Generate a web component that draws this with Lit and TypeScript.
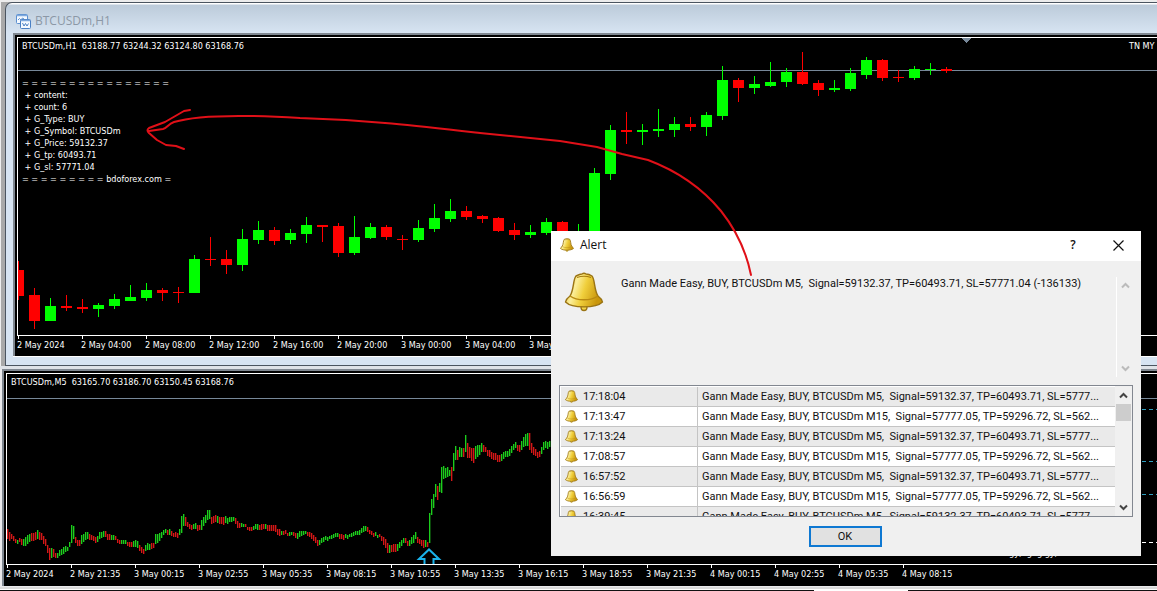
import { LitElement, html, svg, css } from "lit";
import { customElement, property } from "lit/decorators.js";

type Candle = [high: number, low: number, top: number, bottom: number, up: 0 | 1];

// Hourly candles, 16px apart; values are in the vertical units of the workspace.
const H1: Candle[] = [
  [261, 300, 270, 296, 0], [288, 329, 295, 321, 0], [298, 321, 306, 321, 1], [295, 311, 306, 308, 0],
  [299, 313, 307, 309, 0], [303, 317, 305, 309, 1], [294, 309, 299, 306, 1], [285, 301, 297, 301, 1],
  [283, 301, 290, 298, 1], [288, 301, 290, 293, 0], [287, 303, 292, 293, 0], [255, 293, 259, 293, 1],
  [237, 266, 259, 260, 0], [250, 274, 259, 265, 0], [229, 271, 239, 265, 1], [221, 244, 230, 240, 1],
  [227, 245, 230, 241, 0], [229, 244, 233, 240, 1], [217, 243, 225, 234, 1], [225, 242, 225, 227, 0],
  [223, 257, 226, 253, 0], [216, 255, 237, 253, 1], [223, 239, 227, 238, 1], [225, 240, 227, 237, 0],
  [235, 250, 239, 240, 0], [220, 242, 228, 240, 1], [204, 232, 218, 229, 1], [199, 222, 211, 219, 1],
  [206, 220, 211, 217, 0], [215, 223, 216, 219, 0], [217, 232, 218, 231, 0], [223, 240, 230, 235, 0],
  [225, 238, 232, 235, 1], [218, 235, 222, 233, 1], [221, 235, 222, 235, 0], [224, 236, 231, 235, 1],
  [168, 240, 173, 240, 1], [125, 180, 130, 174, 1], [112, 144, 130, 132, 0], [124, 145, 130, 132, 1],
  [109, 137, 129, 131, 1], [117, 137, 124, 130, 1], [117, 131, 124, 127, 0], [112, 136, 115, 127, 1],
  [66, 120, 80, 116, 1], [78, 102, 80, 88, 0], [76, 94, 84, 88, 1], [62, 87, 82, 86, 1],
  [68, 87, 72, 82, 1], [52, 85, 72, 84, 0], [80, 96, 83, 90, 0], [80, 92, 88, 90, 1],
  [68, 91, 73, 89, 1], [57, 79, 60, 75, 1], [59, 81, 60, 78, 0], [70, 82, 77, 78, 0],
  [66, 80, 69, 78, 1], [63, 75, 69, 70, 1], [67, 73, 69, 71, 0],
];

// Five-minute range envelope: x, high, low. Bars between the points are interpolated.
const M5: [number, number, number][] = [
  [7, 529, 539], [9, 532, 541], [11, 534, 539], [15, 539, 543], [19, 538, 542], [22, 540, 547], [25, 537, 546],
  [28, 533, 541], [36, 533, 541], [37, 530, 539], [41, 533, 540], [43, 536, 544], [46, 542, 548], [49, 548, 560],
  [52, 548, 557], [55, 553, 558], [59, 550, 556], [63, 547, 554], [67, 547, 551], [69, 542, 547], [71, 525, 543],
  [73, 526, 539], [75, 537, 543], [79, 540, 546], [81, 535, 544], [87, 532, 539], [91, 535, 540], [95, 537, 543],
  [99, 532, 539], [103, 531, 537], [109, 534, 540], [115, 536, 540], [119, 540, 544], [125, 540, 544],
  [131, 542, 547], [137, 541, 548], [141, 547, 553], [143, 549, 554], [147, 543, 550], [153, 543, 548],
  [155, 534, 544], [161, 532, 538], [165, 529, 533], [169, 529, 535], [173, 533, 537], [177, 533, 538],
  [179, 529, 535], [181, 516, 533], [183, 514, 526], [187, 522, 527], [191, 525, 530], [195, 523, 529],
  [199, 525, 530], [201, 520, 530], [205, 515, 523], [207, 510, 520], [209, 510, 519], [211, 517, 524],
  [217, 516, 523], [223, 517, 525], [229, 517, 522], [233, 517, 521], [237, 521, 528], [243, 524, 527],
  [251, 527, 531], [257, 524, 530], [265, 524, 529], [273, 525, 531], [279, 529, 536], [281, 531, 535],
  [291, 532, 535], [295, 533, 538], [299, 531, 537], [305, 531, 534], [310, 532, 537], [314, 537, 543],
  [317, 540, 546], [323, 537, 542], [329, 536, 539], [337, 533, 537], [343, 535, 540], [349, 534, 537],
  [357, 531, 535], [363, 526, 532], [367, 527, 532], [373, 533, 537], [379, 534, 537], [384, 538, 547],
  [387, 543, 553], [391, 545, 552], [395, 544, 552], [399, 542, 548], [403, 538, 543], [408, 541, 546],
  [413, 535, 543], [415, 532, 539], [419, 539, 544], [423, 540, 548], [427, 542, 547], [429, 513, 543],
  [431, 499, 515], [433, 494, 508], [435, 484, 497], [437, 486, 500], [439, 483, 492], [441, 467, 493],
  [443, 466, 479], [445, 468, 478], [447, 467, 477], [449, 470, 476], [451, 467, 481], [453, 453, 471],
  [455, 446, 460], [457, 450, 460], [459, 447, 457], [463, 448, 457], [465, 435, 452], [467, 443, 458],
  [469, 447, 458], [473, 448, 463], [477, 445, 457], [481, 443, 452], [485, 447, 452], [489, 450, 457],
  [493, 453, 460], [499, 455, 462], [503, 452, 459], [507, 451, 457], [511, 446, 453], [515, 442, 448],
  [519, 445, 452], [523, 437, 447], [527, 433, 446], [529, 433, 450], [531, 443, 453], [534, 450, 457],
  [539, 451, 457], [543, 442, 450], [549, 441, 447], [555, 440, 448],
];

function rangeBars() {
  const bars: { x: number; hi: number; lo: number; up: boolean }[] = [];
  let k = 0;
  for (let x = 7; x <= 553; x += 2) {
    while (M5[k + 1][0] < x) k++;
    const [x0, h0, l0] = M5[k];
    const [x1, h1, l1] = M5[k + 1];
    const t = (x - x0) / (x1 - x0);
    const wobble = x === x0 || x === x1 ? 0 : ((x * 7) % 5) - 2;
    const slope = h1 + l1 - h0 - l0;
    const up = Math.abs(slope) < 3 ? Math.floor(x / 6) % 2 === 0 : slope < 0;
    bars.push({ x, hi: Math.round(h0 + (h1 - h0) * t + wobble / 2), lo: Math.round(l0 + (l1 - l0) * t + wobble / 2), up });
  }
  return bars;
}

const bell = (size: number) => html`
  <svg class="bell" width=${size} height=${size} viewBox="0 0 40 40" aria-hidden="true">
    <defs>
      <linearGradient id="g" x1="0" x2="1" y1="0" y2="0.3">
        <stop offset="0" stop-color="#e9bd1c" /><stop offset="0.35" stop-color="#fbee9a" />
        <stop offset="0.6" stop-color="#f0cf3c" /><stop offset="1" stop-color="#c9960c" />
      </linearGradient>
    </defs>
    <circle cx="20" cy="35.500" r="3" fill="#f3d64a" stroke="#9a7414" stroke-width="1.300" />
    <path d="M12 4 Q16 2 18 2 Q20 0.500 22 2 Q25 2 28 4 C31 7 30 18 34 24 Q38 27 38.500 30 C32 36.500 8 36.500 1.500 30 Q2 27 6 24 C10 18 9 7 12 4Z"
      fill="url(#g)" stroke="#9a7414" stroke-width=${size < 20 ? 2.4 : 1.4} stroke-linejoin="round" />
    <path d="M6 24 C13 29 27 29 34 24" fill="none" stroke="#b98a12" stroke-width="1.300" />
    <path d="M13 5.500 Q20 3 27 5.500" fill="none" stroke="#a67c10" stroke-width="1.200" />
  </svg>`;

const chevron = (up: boolean) => html`
  <svg width="9" height="7" viewBox="0 0 9 7" aria-hidden="true">
    <path d=${up ? "M1 5.500 L4.500 2 L8 5.500" : "M1 1.500 L4.500 5 L8 1.500"} fill="none" stroke="currentColor" stroke-width="2" />
  </svg>`;

@customElement("time-axis")
class TimeAxis extends LitElement {
  @property({ attribute: false }) labels: string[] = [];
  static styles = css`
    :host { display: flex; height: 17px; overflow: hidden; }
    .label { flex: 0 0 64px; white-space: nowrap; line-height: 12px; }
  `;
  render() {
    return this.labels.map((l) => html`<span class="label">${l}</span>`);
  }
}

@customElement("h1-chart")
class H1Chart extends LitElement {
  static styles = css`
    :host { display: grid; background: #000; }
    svg { grid-area: 1 / 1; width: 100%; height: 299px; display: block; shape-rendering: crispEdges; }
    .notes { grid-area: 1 / 1; padding: 3px 0 0 5px; line-height: 12px; min-width: 0; overflow: hidden; }
    .head { display: flex; justify-content: space-between; }
    .expert { flex: 0 0 28px; white-space: nowrap; }
    .comment { margin: 25px 0 0; font: inherit; line-height: 12px; white-space: pre; }
    .quote { white-space: pre; }
  `;
  render() {
    return html`
      <svg aria-label="BTCUSDm hourly candles">
        <g transform="translate(-17 -37)">
          <path d="M18 70.500H3000" stroke="#778899" />
          ${H1.map(([hi, lo, top, bottom, up], i) => {
            const x = 18 + i * 16;
            const fill = up ? "#00ff00" : "#ff0000";
            return svg`<rect x=${x} y=${hi} width="1" height=${lo - hi} fill=${fill} />
              <rect x=${x - 5} y=${top} width="11" height=${bottom - top} fill=${fill} />`;
          })}
          <path d="M961 38H972L966.500 43Z" fill="#778899" />
          <path d="M16 37H17V336H16Z" fill="#000" />
          <path d="M17.500 336V37.500H3000M17 335.500H3000" fill="none" stroke="#fff" />
        </g>
      </svg>
      <div class="notes">
        <div class="head">
          <span class="quote">BTCUSDm,H1  63188.77 63244.32 63124.80 63168.76</span>
          <span class="expert">TN MY</span>
        </div>
        <pre class="comment">${[
          "= = = = = = = = = = = = = = = =",
          " + content:",
          " + count: 6",
          " + G_Type: BUY",
          " + G_Symbol: BTCUSDm",
          " + G_Price: 59132.37",
          " + G_tp: 60493.71",
          " + G_sl: 57771.04",
          "= = = = = = = = = bdoforex.com =",
        ].join("\n")}</pre>
      </div>`;
  }
}

@customElement("m5-chart")
class M5Chart extends LitElement {
  static styles = css`
    :host { display: grid; background: #000; }
    svg { grid-area: 1 / 1; width: 100%; height: 192px; display: block; shape-rendering: crispEdges; }
    .arrow { shape-rendering: auto; }
    .quote { grid-area: 1 / 1; padding: 3px 0 0 5px; line-height: 12px; white-space: pre; }
  `;
  render() {
    return html`
      <svg aria-label="BTCUSDm five minute bars">
        <g transform="translate(-6 -373)">
          <path d="M7 398.500H3000" stroke="#778899" />
          ${rangeBars().map((b) => {
            const fill = b.up ? "#20f020" : "#f81c1c";
            return svg`<rect x=${b.x} y=${b.hi} width="2" height=${b.lo - b.hi} fill=${fill} fill-opacity="0.3" />
              <rect x=${b.x} y=${b.hi} width="1" height=${b.lo - b.hi} fill=${fill} fill-opacity="0.8" />`;
          })}
          <path d="M1142 409.500H3000M1142 461.500H3000M1142 494.500H3000" stroke="#2f9fc0" stroke-dasharray="4 3" />
          <path d="M1142 542.500H3000" stroke="#fff" stroke-dasharray="4 3" />
          <path class="arrow" d="M424.500 564V559H419L429 549.500L439 559H433.500V564" fill="none" stroke="#1ab2ea" stroke-width="2" />
          <path d="M6.500 565V373.500H3000M6 564.500H3000" fill="none" stroke="#fff" />
        </g>
      </svg>
      <span class="quote">BTCUSDm,M5  63165.70 63186.70 63150.45 63168.76</span>`;
  }
}

@customElement("axis-ticks")
class AxisTicks extends LitElement {
  static styles = css`
    :host { display: block; height: 3px; overflow: hidden; }
    svg { display: block; width: 100%; height: 3px; }
  `;
  @property({ type: Number }) count = 15;
  render() {
    return html`<svg aria-hidden="true">${Array.from({ length: this.count }, (_, i) =>
      svg`<rect x=${1 + i * 64} y="0" width="1" height="3" fill="#fff" />`)}</svg>`;
  }
}

const SHORT = "Gann Made Easy, BUY, BTCUSDm M5,  Signal=59132.37, TP=60493.71, SL=5777...";
const LONG = "Gann Made Easy, BUY, BTCUSDm M15,  Signal=57777.05, TP=59296.72, SL=562...";
const ALERTS: [string, string][] = [
  ["17:18:04", SHORT], ["17:13:47", LONG], ["17:13:24", SHORT], ["17:08:57", LONG],
  ["16:57:52", SHORT], ["16:56:59", LONG], ["16:39:45", SHORT],
];

@customElement("alert-dialog")
class AlertDialog extends LitElement {
  static styles = css`
    :host { display: block; background: #f0f0f0; color: #111; font: 11px/14px Roboto, "Noto Sans", sans-serif; }
    button { font: inherit; color: inherit; cursor: default; }
    .title { display: flex; align-items: center; height: 30px; box-sizing: border-box; background: #fff; padding: 0 11px 2px 9px; font: 12px/16px "Open Sans", sans-serif; }
    .title .name { margin: 0 auto 0 6px; font: inherit; }
    .title button { border: 0; background: none; padding: 0; width: 24px; height: 24px; display: grid; place-items: center; }
    .title button.help { margin-right: 21px; font-weight: 600; }
    .message { display: flex; height: 105px; padding: 11px 8px 8px 13px; }
    .message .text { flex: 1; margin: 5px 0 0 17px; white-space: pre; }
    .scroll { display: flex; flex-direction: column; justify-content: space-between; }
    .scroll button { border: 0; padding: 0; height: 17px; background: #f0f0f0; display: grid; place-items: center; }
    .side { width: 16px; margin-top: 5px; border-left: 1px solid #fff; color: #bbb; }
    .list { display: flex; height: 130px; margin: 0 8px; border: 1px solid #828790; background: #fff; overflow: hidden; }
    .rows { flex: 1; min-width: 0; overflow: hidden; padding: 1px 0 0 1px; }
    table { width: 100%; border-collapse: collapse; table-layout: fixed; }
    td { height: 19px; padding: 0; border-bottom: 1px solid #c4c4c4; white-space: pre; overflow: hidden; }
    tr:nth-child(odd) td { background: #eaeaea; }
    td.time { width: 136px; border-right: 1px solid #c4c4c4; }
    .stamp { display: flex; align-items: center; gap: 5px; padding-left: 4px; }
    td.what { padding-left: 4px; }
    .bar { width: 17px; padding-top: 1px; background: #f0f0f0; justify-content: flex-start; color: #444; }
    .thumb { height: 17px; width: 15px; margin: 0 auto auto; background: #cdcdcd; }
    .foot { display: flex; justify-content: center; padding: 9px 2px 9px 0; }
    .ok { width: 73px; height: 21px; padding: 0; border: 2px solid #0e78d2; background: #e1e1e1; }
  `;
  render() {
    return html`
      <div class="title">
        ${bell(14)}
        <h2 class="name">Alert</h2>
        <button class="help" aria-label="Help">?</button>
        <button aria-label="Close"><svg width="11" height="11" viewBox="0 0 11 11"><path d="M0.500 0.500L10.500 10.500M10.500 0.500L0.500 10.500" stroke="#111" stroke-width="1.200" /></svg></button>
      </div>
      <div class="message">
        ${bell(40)}
        <div class="text">Gann Made Easy, BUY, BTCUSDm M5,  Signal=59132.37, TP=60493.71, SL=57771.04 (-136133)</div>
        <div class="scroll side">
          <button aria-label="Scroll message up">${chevron(true)}</button>
          <button aria-label="Scroll message down">${chevron(false)}</button>
        </div>
      </div>
      <div class="list">
        <div class="rows">
          <table>
            <tbody>
              ${ALERTS.map(([time, text]) => html`<tr>
                <td class="time"><div class="stamp">${bell(13)}<span>${time}</span></div></td>
                <td class="what">${text}</td>
              </tr>`)}
            </tbody>
          </table>
        </div>
        <div class="scroll bar">
          <button aria-label="Scroll list up">${chevron(true)}</button>
          <div class="thumb"></div>
          <button aria-label="Scroll list down">${chevron(false)}</button>
        </div>
      </div>
      <div class="foot"><button class="ok">OK</button></div>`;
  }
}

@customElement("app-root")
class AppRoot extends LitElement {
  static styles = css`
    :host { display: block; position: relative; min-height: 100vh; overflow: hidden; background: #e9e9ec; color: #fff; font: 9px/12px "DejaVu Sans Condensed", "Noto Sans", sans-serif; }
    .top { background: #a9a9a9; border-top: 2px solid #ececec; padding-left: 5px; box-shadow: inset 1px 0 #eee; }
    .window { border: 1px solid #4b5560; border-right: 0; border-radius: 7px 0 0 0; background: linear-gradient(#fff 0, #fff 1px, #bccbda 2px, #d7e4f2 30px); padding-left: 7px; }
    .caption { display: flex; align-items: center; gap: 4px; height: 30px; padding: 6px 0 0 3px; box-sizing: border-box; color: #8c98a6; font: 12px/16px "Open Sans", sans-serif; }
    .caption h1 { margin: 0; font: inherit; }
    .frame { border: solid #7f8790; border-width: 2px 0 0 2px; background: #000; padding: 2px 0 0 2px; }
    .edge { height: 8px; border-top: 1px solid #fff; }
    .lower { padding-left: 2px; border-top: 3px solid #dfe3e8; }
    .lower .frame { padding-bottom: 1px; }
    .tabs { display: flex; background: #fff; border-top: 2px solid #dadada; padding-top: 1px; height: 5px; box-sizing: border-box; margin-top: 1px; }
    .tab { border-top: 1px solid #111; }
    .first { flex: 0 0 814px; }
    .gap { flex: 0 0 94px; }
    .rest { flex: 1; }
    .behind { position: absolute; left: 1009px; top: 547px; white-space: pre; }
    .dialog { position: absolute; left: 551px; top: 231px; width: 590px; }
    .stroke { position: absolute; inset: 0; width: 100%; height: 100%; pointer-events: none; }
  `;
  render() {
    return html`
      <div class="top">
        <section class="window">
          <header class="caption">
            <svg width="15" height="15" viewBox="0 0 15 15" aria-hidden="true">
              <rect x="0.500" y="0.500" width="11" height="9" rx="1" fill="#f4f9ff" stroke="#5b8fd0" />
              <path d="M1 1.500H11" stroke="#7fa9dd" stroke-width="1.500" />
              <path d="M2 6L3.500 4.500L5 6L6.500 4L8 5" fill="none" stroke="#5b8fd0" />
              <rect x="4.500" y="5.500" width="10" height="9" rx="1" fill="#f4f9ff" stroke="#4a80c4" />
              <path d="M5 6.500H14" stroke="#7fa9dd" stroke-width="1.500" />
              <path d="M6.500 9L8 12L9.500 9.500L11 12L12.500 9.500" fill="none" stroke="#4a80c4" />
            </svg>
            <h1>BTCUSDm,H1</h1>
          </header>
          <div class="frame">
            <h1-chart></h1-chart>
            <axis-ticks count="12"></axis-ticks>
            <time-axis .labels=${["2 May 2024", "2 May 04:00", "2 May 08:00", "2 May 12:00", "2 May 16:00", "2 May 20:00", "3 May 00:00", "3 May 04:00", "3 May 08:00"]}></time-axis>
          </div>
          <div class="edge"></div>
        </section>
      </div>
      <section class="lower">
        <div class="frame">
          <m5-chart></m5-chart>
          <axis-ticks count="15"></axis-ticks>
          <time-axis .labels=${["2 May 2024", "2 May 21:35", "3 May 00:15", "3 May 02:55", "3 May 05:35", "3 May 08:15", "3 May 10:55", "3 May 13:35", "3 May 16:15", "3 May 18:55", "3 May 21:35", "4 May 00:15", "4 May 02:55", "4 May 05:35", "4 May 08:15"]}></time-axis>
        </div>
      </section>
      <div class="tabs"><div class="tab first"></div><div class="gap"></div><div class="tab rest"></div></div>
      <span class="behind">gy,  g  g gy,</span>
      <alert-dialog class="dialog" role="dialog" aria-label="Alert"></alert-dialog>
      <svg class="stroke" aria-hidden="true">
        <path d="M190 110L184 111L165 122L149 128Q146 130 149 133L157 140L166 145L176 146L184 149
          M149 131L163 129C167 128 168 124 174 122C200 114 250 115 300 118C370 120 420 126 480 133L560 141L597 147L622 154L648 160C680 172 702 188 721 211Q744 240 751 275"
          fill="none" stroke="#e01018" stroke-width="2" stroke-linecap="round" stroke-linejoin="round" />
      </svg>`;
  }
}
